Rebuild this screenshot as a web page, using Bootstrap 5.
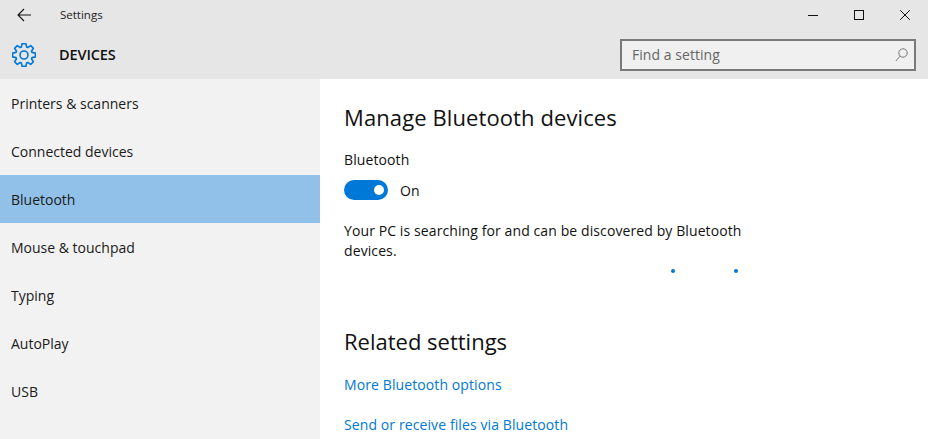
<!DOCTYPE html>
<html lang="en"><head><meta charset="utf-8"><title>Settings</title>
<link href="https://cdn.jsdelivr.net/npm/bootstrap@5.3.0/dist/css/bootstrap.min.css" rel="stylesheet">
<style>
html,body{height:439px;overflow:hidden;background:#fff}
body{font-family:"Open Sans","Noto Sans",sans-serif;font-size:14px;color:#111}
.hdr{height:79px;background:#e6e6e6}
.titlebar{height:30px}
.backbtn{width:48px}
.ttl{font-size:11.5px;margin-left:12px;color:#222}
.winbtn{width:46px;height:30px}
.subbar{height:49px;padding:1px 12px 0 12px}
.gear{width:24px;height:24px}
.devname{font-size:14.5px;font-weight:600;color:#111;margin-left:23px;letter-spacing:-.1px}
.searchbox{width:296px;height:32px;border:2px solid #7a7a7a;background:#f0f0f0;color:#666;font-size:14px;letter-spacing:.05px;padding:0 6px 0 10px}
.searchtxt{margin-bottom:2px}
.side{width:320px;height:360px;background:#f2f2f2}
.sideitem{height:48px;padding-left:11px;font-size:14px;color:#1a1a1a}
.sideitem.sel{background:#91c1e8}
.mainpane{padding:0 0 0 24px;width:608px;background:#fff;letter-spacing:.1px}
.hd{font-size:22px;font-weight:400;color:#111;margin:0;line-height:30px}
.hd1{margin-top:23px;letter-spacing:.1px}
.lbl{margin-top:18px;line-height:20px}
.togrow{margin-top:10px;height:20px}
.tog{width:44px;height:20px;border-radius:10px;background:#0078d7;padding-right:4px}
.knob{width:10px;height:10px;border-radius:50%;background:#fff}
.ontxt{margin-left:12px}
.para{width:420px;margin:21px 0 0;line-height:20px}
.dotsrow{height:5px;margin-top:8px;position:relative}
.dot{position:absolute;top:0;width:4px;height:4px;border-radius:50%;background:#0078d7}
.d1{left:327px}.d2{left:390px}
.hd2{margin-top:52px;letter-spacing:0}
.lnk{display:block;color:#0078d7;text-decoration:none;line-height:20px}
.l1{margin-top:19px}.l2{margin-top:20px}
</style></head><body>
<div class="hdr">
  <div class="titlebar d-flex align-items-center">
    <div class="backbtn d-flex justify-content-center">
      <svg width="14" height="14" viewBox="0 0 14 14" fill="none" stroke="#111" stroke-width="1.1"><path d="M1 7H14M7 1L1 7L7 13"/></svg>
    </div>
    <div class="ttl">Settings</div>
    <div class="ms-auto d-flex">
      <div class="winbtn d-flex align-items-center justify-content-center"><svg width="10" height="10" viewBox="0 0 10 10"><path d="M0 5.5H10" stroke="#111"/></svg></div>
      <div class="winbtn d-flex align-items-center justify-content-center"><svg width="10" height="10" viewBox="0 0 10 10" fill="none"><rect x=".5" y=".5" width="9" height="9" stroke="#111"/></svg></div>
      <div class="winbtn d-flex align-items-center justify-content-center"><svg width="10" height="10" viewBox="0 0 10 10"><path d="M.2 .2L9.8 9.8M9.8 .2L.2 9.8" stroke="#111"/></svg></div>
    </div>
  </div>
  <div class="subbar d-flex align-items-center">
    <svg class="gear" viewBox="0 0 24 24" fill="none" stroke="#0078d7" stroke-width="1.6" stroke-linejoin="round"><polygon points="9.4,4 10.1,.6 13.9,.6 14.6,4 15.8,4.5 18.7,2.6 21.4,5.3 19.5,8.2 20,9.4 23.4,10.1 23.4,13.9 20,14.6 19.5,15.8 21.4,18.7 18.7,21.4 15.8,19.5 14.6,20 13.9,23.4 10.1,23.4 9.4,20 8.2,19.5 5.3,21.4 2.6,18.7 4.5,15.8 4,14.6 .6,13.9 .6,10.1 4,9.4 4.5,8.2 2.6,5.3 5.3,2.6 8.2,4.5"/><circle cx="12" cy="12" r="4"/></svg>
    <div class="devname">DEVICES</div>
    <div class="searchbox ms-auto d-flex align-items-center justify-content-between">
      <span class="searchtxt">Find a setting</span>
      <svg width="13" height="14" viewBox="0 0 13 14" fill="none" stroke="#777"><circle cx="8" cy="5" r="4.2"/><path d="M5 8.2L.8 13"/></svg>
    </div>
  </div>
</div>
<div class="d-flex">
  <div class="side">
    <div class="sideitem d-flex align-items-center">Printers &amp; scanners</div>
    <div class="sideitem d-flex align-items-center">Connected devices</div>
    <div class="sideitem sel d-flex align-items-center">Bluetooth</div>
    <div class="sideitem d-flex align-items-center">Mouse &amp; touchpad</div>
    <div class="sideitem d-flex align-items-center">Typing</div>
    <div class="sideitem d-flex align-items-center">AutoPlay</div>
    <div class="sideitem d-flex align-items-center">USB</div>
  </div>
  <div class="mainpane">
    <h2 class="hd hd1">Manage Bluetooth devices</h2>
    <div class="lbl">Bluetooth</div>
    <div class="togrow d-flex align-items-center">
      <div class="tog d-flex align-items-center justify-content-end"><div class="knob"></div></div>
      <span class="ontxt">On</span>
    </div>
    <p class="para">Your PC is searching for and can be discovered by Bluetooth devices.</p>
    <div class="dotsrow"><span class="dot d1"></span><span class="dot d2"></span></div>
    <h2 class="hd hd2">Related settings</h2>
    <a class="lnk l1" href="#">More Bluetooth options</a>
    <a class="lnk l2" href="#">Send or receive files via Bluetooth</a>
  </div>
</div>
</body></html>
